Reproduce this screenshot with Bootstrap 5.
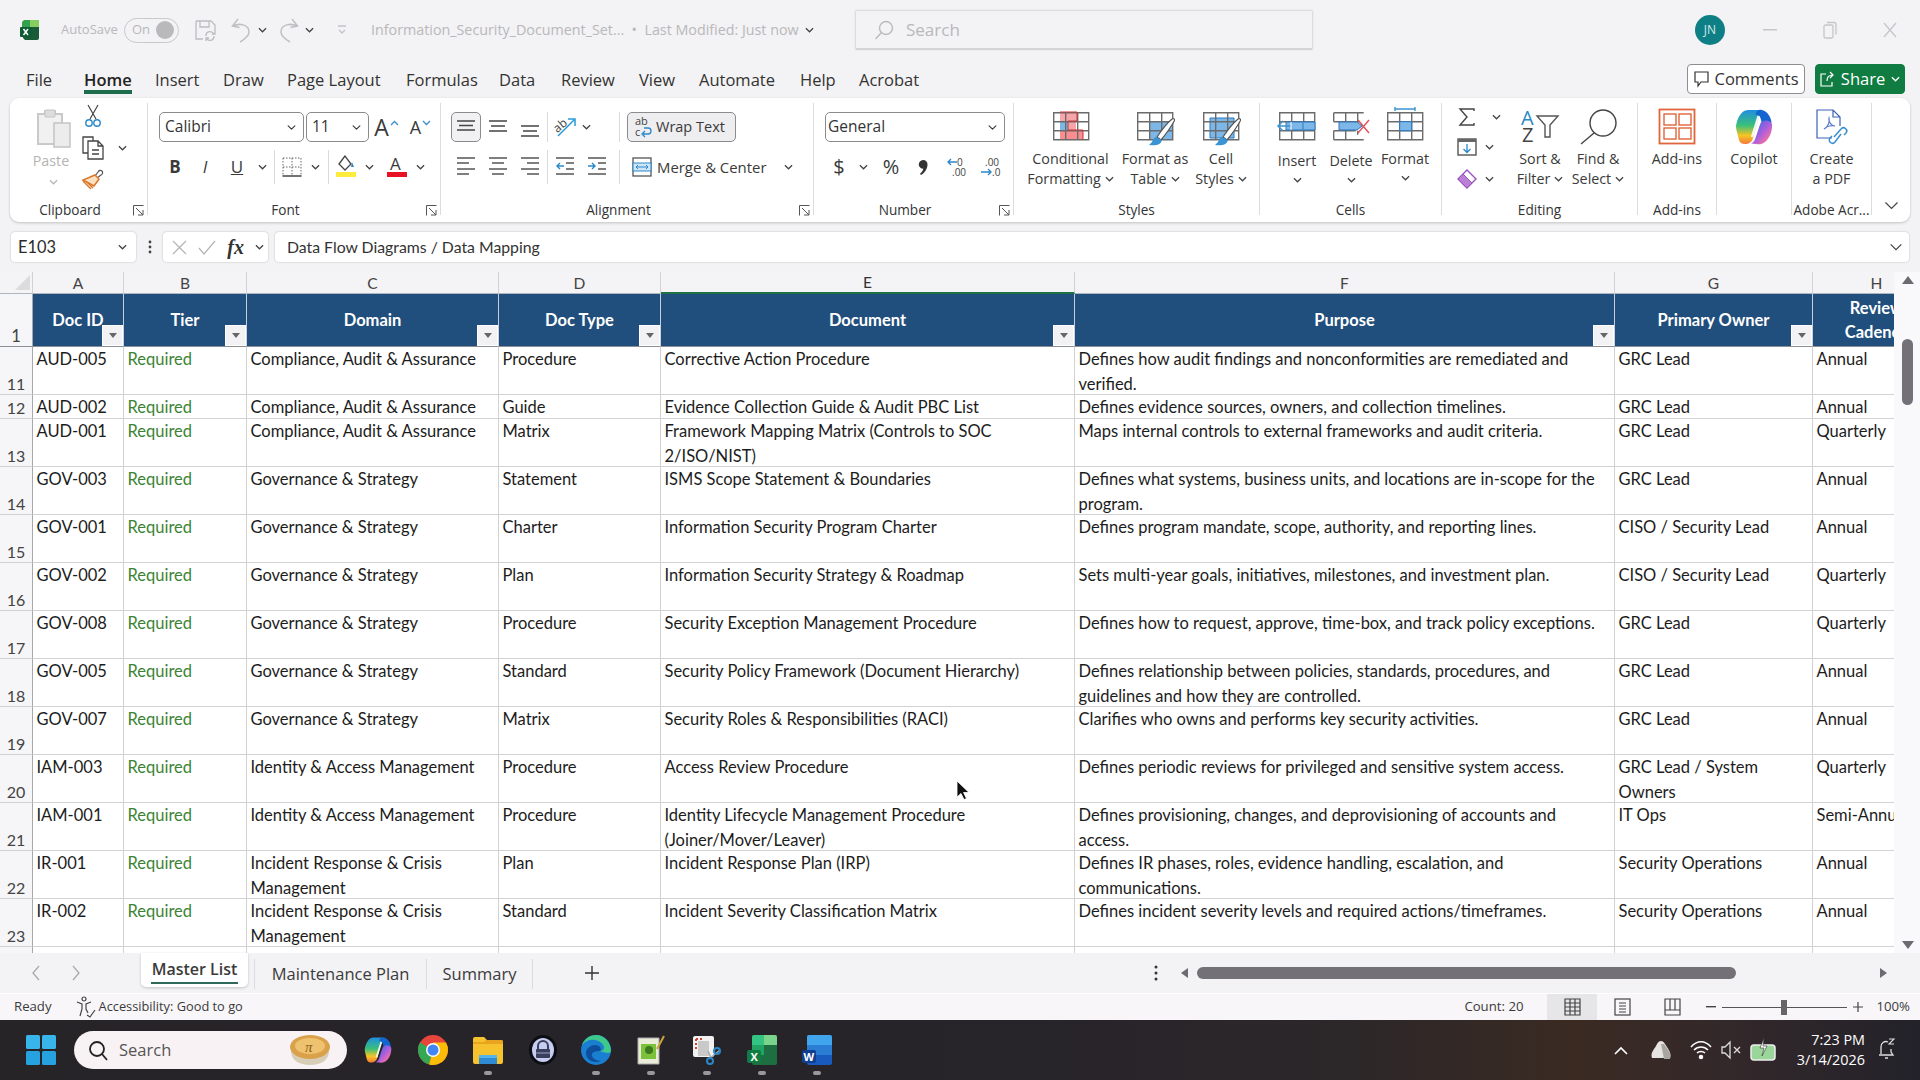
<!DOCTYPE html>
<html lang="en">
<head>
<meta charset="UTF-8">
<title>Information_Security_Document_Set</title>
<link rel="stylesheet" href="https://cdn.jsdelivr.net/npm/bootstrap@5.3.0/dist/css/bootstrap.min.css">
<style>
body { width:1920px; height:1080px; overflow:hidden; background:#f3f2f4; font-family:"Open Sans","Noto Sans",sans-serif; color:#2b2b2b; position:relative; }
svg { display:block; flex:none; overflow:visible; }
.chv { width:9px; height:6px; color:#444; }
.xl-title { display:grid; height:60px; padding-left:20px; align-items:center; justify-items:start; color:#b9b8bb; font-size:13px; white-space:nowrap;
  grid-template-columns:41px 63px 71px 36px 27px 21px 26px 31px 35px 484px 458px 382px 45px 60px 60px 60px; }
.ctr { justify-self:center; }
.xl-doc { font-size:14.3px; display:flex; align-items:center; gap:6px; }
.xl-toggle { width:55px; height:25px; border:1.5px solid #c9c8cb; border-radius:13px; display:flex; align-items:center; justify-content:space-between; padding:0 4px 0 7px; font-size:13px; }
.xl-toggle i { width:18px; height:18px; border-radius:50%; background:#b9b8bb; }
.xl-search { width:458px; height:40px; border:1px solid #dcdbde; border-bottom:2px solid #d3d2d5; border-radius:2px; display:flex; align-items:center; gap:12px; padding-left:18px; font-size:17px; box-shadow:0 0 2px #ddd; }
.xl-avatar { width:30px; height:30px; border-radius:50%; background:#0f7f86; color:#cfe9ea; font-size:12px; display:flex; align-items:center; justify-content:center; }
.xl-tabrow { height:38px; display:flex; justify-content:space-between; padding:0 15px 0 26px; }
.xl-tabs { display:grid; grid-template-columns:58px 71px 68px 64px 119px 93px 62px 78px 60px 101px 59px 70px; flex-wrap:nowrap; font-size:16.5px; height:38px; }
.xl-tabs .nav-link { padding:7px 0 0; color:#333; white-space:nowrap; display:inline-block; height:34px; line-height:26px; }
.xl-tabs .active { font-weight:600; border-bottom:4px solid #1e6e4d; color:#222; }
.xl-tabbtn { display:flex; gap:10px; padding-top:4px; }
.xl-tabbtn .btn { height:30px; padding:0; display:flex; align-items:center; justify-content:center; gap:6px; font-size:16.5px; border-radius:4px; }
.btn-cmt { width:118px; background:#fff; border:1px solid #8e8d90; color:#333; }
.btn-shr { width:90px; background:#107c41; border:1px solid #107c41; color:#fff; }

.xl-ribbon { height:124px; margin:0 10px; padding:5px 0 7px; background:#fff; border-radius:9px; box-shadow:0 1px 3px rgba(0,0,0,.2); display:flex; font-size:14.3px; color:#3a3a3a; white-space:nowrap; }
.rb-grp { display:flex; flex-direction:column; justify-content:space-between; height:112px; border-right:1px solid #dcdcdc; }
.rb-lbl { display:flex; height:10px; line-height:10px; font-size:13.6px; color:#333; flex:none; align-items:center; }
.rb-lbl span { flex:1; text-align:center; }
.rb-launch { width:17px; display:flex; justify-content:center; color:#555; }
.rb-body { display:flex; height:97px; }
.rb-stack { display:flex; flex-direction:column; gap:10px; padding-top:9px; }
.rb-row { display:grid; grid-template-rows:30px; align-items:center; justify-items:center; height:30px; }
.rb-sep { width:1px; height:30px; background:#dadada; }
.rb-row + .rb-row .rb-sep { height:34px; }
.xl-sel { height:30px; font-size:15.5px; padding:0 0 0 5px; border:1px solid #8b8b8b; border-radius:5px; color:#333; background-size:9px 9px; background-position:right 7px center; }
.rb-numsel { width:180px; justify-self:start; padding-left:2px; }
.rb-a { display:flex; align-items:flex-start; line-height:28px; color:#3a3a3a; }
.rb-a svg { margin-top:7px; margin-left:1px; }
.rb-a-lg { font-size:23px; } .rb-a-sm { font-size:18px; }
.rb-on { width:30px; height:30px; border:1px solid #8b8b8b; border-radius:5px; background:#f1f0f2; display:flex; align-items:center; justify-content:center; }
.rb-wrap { width:109px; height:30px; border:1px solid #8b8b8b; border-radius:5px; background:#eeedf0; display:flex; align-items:center; gap:3px; padding-left:7px; justify-self:start; font-size:14.5px; }
.rb-merge { display:flex; align-items:center; justify-self:start; padding-left:5px; gap:5px; width:170px; font-size:14.9px; }
.rb-merge .chv { margin-left:auto; margin-right:4px; }
.rb-big { display:flex; flex-direction:column; align-items:center; line-height:20px; }
.rb-big > svg { margin-top:5px; margin-bottom:3px; }
.rb-big .chv { display:inline-block; margin-left:4px; vertical-align:2px; }
.rb-big .lone { margin:6px 0 0; }
.rb-down { margin-top:2px; }
.tx-b { font-weight:700; font-size:17px; color:#3a3a3a; }
.tx-sym { font-size:20px; line-height:24px; }

.clip-wrap { padding-left:16px; }
.clip-paste { width:50px; color:#b5b5b5; }
.clip-paste > svg:first-child { margin-left:6px; }
.clip-small { display:grid; grid-template-columns:34px 24px; grid-auto-rows:32px; align-items:center; justify-items:center; margin:-3px 0 0 0; }
.g-clip { width:138px; }
.gw-font { width:293px; } .gw-align { width:373px; } .gw-num { width:200px; } .gw-sty { width:246px; } .gw-cel { width:182px; } .gw-edt { width:196px; } .gw-add { width:79px; } .gw-cop { width:75px; } .gw-pdf { width:80px; }
.pl-10 { padding-left:10px; }
.pl-11 { padding-left:11px; }
.pl-13 { padding-left:13px; }
.fr1 { grid-template-columns:145px 63px 35px 33px; }
.fr2 { grid-template-columns:28px 32px 32px 18px 6px 30px 16px 10px 26px 20px 36px 10px; }
.ar1 { grid-template-columns:30px 34px 30px 4px 32px 10px 26px 4px 6px 108px; }
.ar2 { grid-template-columns:30px 34px 30px 4px 32px 32px 4px 4px 6px 170px; }
.nr2 { grid-template-columns:28px 20px 36px 28px 3px 34px 32px; }
.sty-col { display:grid; grid-template-columns:87px 82px 50px; padding-left:13px; }
.cel-col { display:grid; grid-template-columns:54px 54px 54px; padding-left:10px; }
.edt-col { display:grid; grid-template-columns:58px 60px 56px; padding-left:10px; }
.edt-small { display:grid; grid-template-columns:30px 28px; grid-template-rows:28px 32px 32px; align-items:center; justify-items:center; }
.edt-small .near { margin-right:14px; }
.rb-one { justify-content:center; }
.rb-collapse { flex:1; display:flex; align-items:flex-end; justify-content:center; padding-bottom:5px; }
.rb-collapse svg { width:15px; height:9px; color:#444; }

.xl-fbar { height:50px; display:grid; grid-template-columns:125px 27px 105px 7px 1fr; align-items:center; padding:0 11px; font-family:Lato,sans-serif; font-size:16.4px; }
.fb-box { height:30px; background:#fff; border-radius:4px; box-shadow:0 0 2px rgba(0,0,0,.25); display:flex; align-items:center; }
.fb-name { padding:0 9px 0 7px; justify-content:space-between; }
.fb-fx { padding:0 4px 0 9px; justify-content:space-between; color:#aaa; }
.fb-fml { padding:0 6px 0 12px; justify-content:space-between; color:#333; font-size:15.8px; }
.fb-kebab { justify-self:center; }
.fb-fxt { font-family:"Liberation Serif",serif; font-style:italic; font-size:20px; color:#333; font-weight:700; }

.xl-sheet { position:relative; height:681px; overflow:hidden; background:#fff; }
.xl-gridwrap { width:1894px; height:681px; overflow:hidden; }
table.xl-grid { width:1941px; margin:0; table-layout:fixed; border-collapse:separate; border-spacing:0; font-family:Lato,sans-serif; font-size:16.5px; color:#1c1c1c; }
.xl-grid col:nth-child(1) { width:33px; } .xl-grid col:nth-child(2) { width:91px; } .xl-grid col:nth-child(3) { width:123px; } .xl-grid col:nth-child(4) { width:252px; }
.xl-grid col:nth-child(5) { width:162px; } .xl-grid col:nth-child(6) { width:414px; } .xl-grid col:nth-child(7) { width:540px; } .xl-grid col:nth-child(8) { width:198px; } .xl-grid col:nth-child(9) { width:128px; }
.xl-grid.table > :not(caption) > * > * { padding:0; background:transparent; border-bottom:1px solid #d2d2d2; border-right:1px solid #d2d2d2; box-shadow:none; color:inherit; }
.xl-grid.table > thead > .letters > th { height:21px; line-height:20px; background:#f4f3f5; font-weight:400; text-align:center; font-size:15.5px; color:#444; border-bottom:1px solid #aeb6c0; }
.xl-grid.table > thead > .letters > th.sel { border-bottom:2px solid #1e7145; color:#333; }
.xl-grid.table > thead > .heads > th { height:53px; background:#214f7d; color:#fff; font-weight:700; text-align:center; line-height:24px; position:relative; vertical-align:middle; border-right:1px solid #c7cfda; border-bottom:1px solid #8a8f96; }
.xl-grid.table > thead > .heads > th.rn { background:#f6f5f7; color:#444; font-weight:400; vertical-align:bottom; line-height:19px; border-right:1px solid #a8a8a8; border-bottom:1px solid #8a8f96; }
.xl-grid.table > tbody > tr > td.rn { background:#f6f5f7; color:#444; text-align:center; vertical-align:bottom; line-height:20px; border-right:1px solid #a8a8a8; font-size:16px; }
.xl-filter { position:absolute; right:0; bottom:0; width:21px; height:21px; background:#f2f2f4; border:1px solid #fff; display:flex; align-items:center; justify-content:center; }
.xl-filter i { border:4px solid transparent; border-top:5px solid #666; border-bottom:0; }
.cellt { padding:0 3.500px; line-height:24.5px; white-space:nowrap; overflow:hidden; }
.r1 .cellt { height:23px; } .r2 .cellt { height:47px; } .r3 .cellt { height:6px; }
.tier { color:#3c8434; }
.xl-corner { position:absolute; left:15px; top:3px; width:0; height:0; border-style:solid; border-width:0 0 15px 15px; border-color:transparent transparent #dcdbde transparent; }
.xl-vs { position:absolute; right:0; top:0; width:26px; height:681px; background:#f9f8fa; }
.vs-up { position:absolute; left:8px; top:4px; border:6px solid transparent; border-top:0; border-bottom:8px solid #6d6a70; }
.vs-thumb { position:absolute; left:8px; top:67px; width:11px; height:66px; border-radius:6px; background:#747078; }
.vs-dn { position:absolute; left:8px; bottom:4px; border:6px solid transparent; border-bottom:0; border-top:8px solid #6d6a70; }

.xl-sheets { height:40px; display:grid; grid-template-columns:40px 70px 107px 7px 172px 106px 118px 499px 12px 1fr; align-items:center; padding-left:31px; font-size:16.5px; color:#3b3b3b; white-space:nowrap; background:#f3f2f4; }
.sh-on { height:34px; align-self:start; background:#fff; border-radius:0 0 5px 5px; box-shadow:0 1px 3px rgba(0,0,0,.2); font-weight:600; text-align:center; position:relative; line-height:32px; font-size:16px; }
.sh-on::after { content:''; position:absolute; left:10px; right:10px; bottom:3px; height:2px; background:#2d6a5a; }
.sh-tab { display:flex; justify-content:center; border-right:1px solid #dcdbde; height:30px; align-items:center; margin-top:2px; }
.hs { display:flex; align-items:center; padding-left:19px; }
.hs-l { border:5.5px solid transparent; border-left:0; border-right:7px solid #6d6a70; margin-right:9px; }
.hs-r { border:5.5px solid transparent; border-right:0; border-left:7px solid #6d6a70; margin-left:144px; }
.hs-thumb { width:539px; height:12px; border-radius:6px; background:#747078; }
.xl-status { height:27px; background:#f8f6f9; border-top:1px solid #fff; display:flex; align-items:center; font-size:13.2px; color:#3a3a3a; padding-left:14px; white-space:nowrap; }
.st-acc { font-size:12.8px; margin-left:3px; }
.st-view { width:50px; height:27px; display:flex; align-items:center; justify-content:center; }
.st-view.on { background:#e6e5e7; }
.st-minus { margin-left:9px; }
.st-slide { width:125px; height:1px; background:#555; position:relative; margin:0 6px 0 6px; }
.st-slide i { position:absolute; left:59px; top:-7px; width:6px; height:15px; background:#666; }
.st-zoom { margin:0 10px 0 13px; }
.xl-task { height:60px; background:linear-gradient(90deg,#262427 0%,#27242a 55%,#2c2729 70%,#3a2a22 82%,#33282a 90%,#23222a 100%); display:flex; align-items:center; position:relative; color:#fff; }
.tb-start { margin-left:26px; }
.tb-search { width:273px; height:38px; margin-left:18px; background:#f8f2f4; border-radius:19px; display:flex; align-items:center; color:#555; font-size:16.5px; padding-left:14px; gap:11px; }
.tb-search svg:last-child { margin-left:auto; margin-right:15px; }
.tb-icons { display:grid; grid-template-columns:55px 55px 55px 55px 52px 58px 54px 55px 55px; margin-left:3px; justify-items:center; }
.tb-app { position:relative; height:60px; display:flex; align-items:center; }
.tb-app.run::after { content:''; position:absolute; bottom:5px; left:50%; margin-left:-4px; width:8px; height:4px; border-radius:2px; background:#9a989b; }
.tb-tray { margin-left:auto; display:flex; align-items:center; padding-right:24px; }
.tr-a { margin-right:22px; } .tr-b { margin-right:18px; } .tr-c { margin-right:9px; }
.tb-clock { text-align:right; font-size:14.4px; line-height:20px; margin:0 13px 0 21px; }
.xl-cursor { position:absolute; left:956px; top:780px; }
</style>
<script src="https://cdn.jsdelivr.net/npm/bootstrap@5.3.0/dist/js/bootstrap.bundle.min.js"></script>
</head>
<body class="d-flex flex-column">

<svg width="0" height="0" class="position-absolute">
  <defs>
    <symbol id="cv" viewBox="0 0 10 6"><path d="M1 1l4 4 4-4" fill="none" stroke="currentColor" stroke-width="1.4"/></symbol>
    <symbol id="lau" viewBox="0 0 11 11"><path d="M.5 10.5V.5h10M3 3l7 7M10 5v5H5" fill="none" stroke="currentColor"/></symbol>
    <linearGradient id="cpA" x1="0" y1="0" x2="0" y2="1"><stop offset="0" stop-color="#1f8fe0"/><stop offset=".45" stop-color="#39c07a"/><stop offset=".75" stop-color="#f6c524"/><stop offset="1" stop-color="#f5793a"/></linearGradient>
    <linearGradient id="cpB" x1="0" y1="0" x2="1" y2="1"><stop offset="0" stop-color="#1d6fd6"/><stop offset=".5" stop-color="#a55ee0"/><stop offset=".8" stop-color="#f06fa8"/><stop offset="1" stop-color="#f5793a"/></linearGradient>
    <symbol id="copilot" viewBox="0 0 38 38">
      <path d="M13 2h9c3 0 3.500 2 2.500 5L18 30c-1 4-4 6-8 6-5 0-6-3-7-8-1-4-2-7-2-10C2 11 6 2 13 2z" fill="url(#cpA)"/>
      <path d="M27 2c-3-1-5 0-6 3l-.500 2c2-1 4 0 5 3l1 4c.500 2 2 3 4 2 2 0 4-2 6-1 0-5-4-12-9.500-13z" fill="#1565d0"/>
      <path d="M37 16c.500 8-3 15-7 18-3 2.500-6 2.500-9 2l-5-.5c3-1 4-4 5-7l4-12c1-3 3-4 6-4 2 0 5 1 6 3.500z" fill="url(#cpB)"/>
      <path d="M23.500 8 17 29" stroke="#fff" stroke-width="2.400" opacity=".9"/>
    </symbol>
    <symbol id="grid36" viewBox="0 0 40 38"><path d="M2.700 4.700h35v27h-35zM2.700 13.700h35M2.700 22.700h35M14.700 4.700v27M26.700 4.700v27" fill="none" stroke="#6b6b6b" stroke-width="1.400"/></symbol>
    <symbol id="brush" viewBox="0 0 40 38"><path d="M37 11c1-1 3 0 2.500 1.500C36 19 31 26 26 32l-4-3c4-6 9-13 15-18z" fill="#fff" stroke="#555" stroke-width="1.200"/><path d="M21 29c-3 1-3 5-7 8 6 1 12 0 13-5z" fill="#3a94d3"/></symbol>
  </defs>
</svg>

<!-- Title bar -->
<div class="xl-title">
  <svg width="20" height="20" viewBox="0 0 20 20"><path d="M5 0h12a2 2 0 0 1 2 2v16a2 2 0 0 1-2 2H5l-2-2V2z" fill="#185c37"/><path d="M10 0h7a2 2 0 0 1 2 2v5h-9z" fill="#86cf5e"/><path d="M4 0h6v7H2V2z" fill="#33a04f"/><rect y="7" width="12" height="10" rx="1" fill="#0f5b33"/><path d="M3.500 9l4.500 6M8 9l-4.500 6" stroke="#fff" stroke-width="1.500"/></svg>
  <span>AutoSave</span>
  <div class="xl-toggle">On<i></i></div>
  <svg width="21" height="21" viewBox="0 0 21 21" fill="none" stroke="#bdbcc0" stroke-width="1.300"><path d="M1 1h15l4 4v6M1 1v18h7M5 1v6h9V1"/><path d="M11 16a4 4 0 0 1 7-3l2 1M19 16a4 4 0 0 1-7 3l-1-1M20 11v3h-3M11 21v-3h3"/></svg>
  <svg width="20" height="25" viewBox="0 0 20 25" fill="none" stroke="#c0bfc3" stroke-width="1.500"><path d="M7 1L1.500 8l7 1.500M2 8c6-3 16-2 16 6 0 4-4 7-9 10"/></svg>
  <svg class="chv"><use href="#cv"/></svg>
  <svg width="20" height="25" viewBox="0 0 20 25" fill="none" stroke="#c0bfc3" stroke-width="1.500"><path d="M13 1l5.500 7-7 1.500M18 8C12 5 2 6 2 14c0 4 4 7 9 10"/></svg>
  <svg class="chv"><use href="#cv"/></svg>
  <svg width="12" height="12" viewBox="0 0 12 12" fill="none" stroke="#c4c3c7" stroke-width="1.300"><path d="M2 2h8M3 6l3 3 3-3"/></svg>
  <span class="xl-doc">Information_Security_Document_Set... &nbsp;•&nbsp; Last Modified: Just now <svg class="chv"><use href="#cv"/></svg></span>
  <div class="xl-search"><svg width="20" height="20" viewBox="0 0 20 20" fill="none" stroke="#bbb" stroke-width="1.400"><circle cx="12" cy="8" r="6.500"/><path d="M7.500 12.500 1.500 19"/></svg>Search</div>
  <span></span>
  <div class="xl-avatar">JN</div>
  <svg class="ctr" width="14" height="2"><rect width="14" height="1.500" fill="#c6c5c9"/></svg>
  <svg class="ctr" width="14" height="18" viewBox="0 0 14 18" fill="none" stroke="#c6c5c9" stroke-width="1.300"><rect x="1" y="4" width="9" height="13" rx="1.500"/><path d="M4 1.500h7a2 2 0 0 1 2 2v10"/></svg>
  <svg class="ctr" width="14" height="18" viewBox="0 0 14 18" stroke="#c6c5c9" stroke-width="1.300"><path d="M1 2l12 14M13 2 1 16"/></svg>
</div>

<!-- Menu tabs -->
<div class="xl-tabrow">
  <ul class="nav xl-tabs">
    <li><a class="nav-link" href="#">File</a></li>
    <li><a class="nav-link active" href="#">Home</a></li>
    <li><a class="nav-link" href="#">Insert</a></li>
    <li><a class="nav-link" href="#">Draw</a></li>
    <li><a class="nav-link" href="#">Page Layout</a></li>
    <li><a class="nav-link" href="#">Formulas</a></li>
    <li><a class="nav-link" href="#">Data</a></li>
    <li><a class="nav-link" href="#">Review</a></li>
    <li><a class="nav-link" href="#">View</a></li>
    <li><a class="nav-link" href="#">Automate</a></li>
    <li><a class="nav-link" href="#">Help</a></li>
    <li><a class="nav-link" href="#">Acrobat</a></li>
  </ul>
  <div class="xl-tabbtn">
    <button class="btn btn-cmt"><svg width="15" height="16" viewBox="0 0 15 16" fill="none" stroke="#333" stroke-width="1.200"><path d="M1 1h13v10H7l-3 4v-4H1z"/></svg>Comments</button>
    <button class="btn btn-shr"><svg width="15" height="16" viewBox="0 0 15 16" fill="none" stroke="#fff" stroke-width="1.200"><path d="M6 3H1v12h11v-4M7 10c0-4 2-6 6-6M10 1l3 3-3 3"/></svg>Share <svg class="chv text-white"><use href="#cv"/></svg></button>
  </div>
</div>

<!-- Ribbon -->
<div class="xl-ribbon">
  <div class="rb-grp g-clip">
    <div class="rb-body clip-wrap">
      <div class="rb-big clip-paste">
        <svg width="36" height="40" viewBox="0 0 36 40"><path d="M2 6h7V3h10v3h7v30H2z" fill="#f1f1f1" stroke="#c9c9c9" stroke-width="2"/><rect x="9" y="2" width="10" height="7" rx="1" fill="#ddd" stroke="#c4c4c4"/><rect x="18" y="15" width="16" height="24" fill="#ececec" stroke="#c4c4c4" stroke-width="1.500"/></svg>
        <span>Paste</span>
        <svg class="chv text-secondary mt-2 opacity-50"><use href="#cv"/></svg>
      </div>
      <div class="clip-small">
        <svg width="22" height="24" viewBox="0 0 22 24" fill="none"><path d="M6 1l8 14M16 1 8 15" stroke="#444" stroke-width="1.200"/><circle cx="7" cy="19" r="3.200" stroke="#2b88c8" stroke-width="1.400"/><circle cx="15" cy="19" r="3.200" stroke="#2b88c8" stroke-width="1.400"/></svg>
        <span></span>
        <svg width="22" height="24" viewBox="0 0 22 24" fill="none" stroke="#444" stroke-width="1.300"><path d="M11 5V1H1v16h5"/><path d="M6 5h10l5 5v13H6zM16 5v5h5M10 14h7M10 18h7"/></svg>
        <svg class="chv"><use href="#cv"/></svg>
        <svg width="24" height="22" viewBox="0 0 24 22" fill="none"><path d="M14 7l3-4c1-2 3-2 4-1s1 3-1 4l-4 3z" stroke="#555" stroke-width="1.200"/><path d="M14 6l4 4-5 7-11-6z" fill="#fbe1c1" stroke="#d9782a" stroke-width="1.500"/><path d="M6 13l6 6M2 12l8 8" stroke="#d9782a" stroke-width="1.500"/></svg>
      </div>
    </div>
    <div class="rb-lbl"><span>Clipboard</span><div class="rb-launch"><svg width="11" height="11"><use href="#lau"/></svg></div></div>
  </div>

  <div class="rb-grp gw-font">
    <div class="rb-stack pl-13">
      <div class="rb-row fr1">
        <select class="form-select xl-sel w-100 me-1"><option>Calibri</option></select>
        <select class="form-select xl-sel w-100"><option>11</option></select>
        <span class="rb-a rb-a-lg">A<svg width="9" height="6" viewBox="0 0 9 6"><path d="M1 5l3.500-3.500L8 5" stroke="#3a8fd0" stroke-width="1.300" fill="none"/></svg></span>
        <span class="rb-a rb-a-sm">A<svg width="9" height="6" viewBox="0 0 9 6"><path d="M1 1l3.500 3.500L8 1" stroke="#3a8fd0" stroke-width="1.300" fill="none"/></svg></span>
      </div>
      <div class="rb-row fr2">
        <span class="tx-b">B</span><i class="tx-b fw-normal">I</i><span class="text-decoration-underline tx-b fw-normal">U</span>
        <svg class="chv"><use href="#cv"/></svg>
        <span class="rb-sep"></span>
        <svg width="20" height="20" viewBox="0 0 20 20" fill="none" stroke="#666"><path d="M1 1h18v18M1 1v18M10 1v18M1 10h18" stroke-dasharray="1.500 1.500"/><path d="M.5 19h19" stroke="#444" stroke-width="1.500"/></svg>
        <svg class="chv"><use href="#cv"/></svg>
        <span class="rb-sep"></span>
        <svg width="20" height="24" viewBox="0 0 20 24"><path d="M9 1 3 9l6 6 6-6z" fill="#fff" stroke="#444" stroke-width="1.300"/><path d="M16 7l2 5-3 0z" fill="#2b88c8"/><rect y="17" width="20" height="5" fill="#ffeb3b"/></svg>
        <svg class="chv"><use href="#cv"/></svg>
        <svg width="20" height="24" viewBox="0 0 20 24"><text x="3" y="15" font-size="17" fill="#3a3a3a" font-family="Open Sans">A</text><rect y="17" width="20" height="5" fill="#e81123"/></svg>
        <svg class="chv"><use href="#cv"/></svg>
      </div>
    </div>
    <div class="rb-lbl"><span>Font</span><div class="rb-launch"><svg width="11" height="11"><use href="#lau"/></svg></div></div>
  </div>

  <div class="rb-grp gw-align">
    <div class="rb-stack pl-10">
      <div class="rb-row ar1">
        <div class="rb-on"><svg width="18" height="16" viewBox="0 0 18 16" stroke="#444" stroke-width="1.300"><path d="M0 2h18M2 6.500h14M0 11h18"/></svg></div>
        <svg width="18" height="24" viewBox="0 0 18 24" stroke="#444" stroke-width="1.300"><path d="M0 6h18M2 11h14M0 16h18"/></svg>
        <svg width="18" height="24" viewBox="0 0 18 24" stroke="#444" stroke-width="1.300"><path d="M0 11h18M2 16h14M0 21h18"/></svg>
        <span class="rb-sep"></span>
        <svg width="22" height="20" viewBox="0 0 22 20"><text x="0" y="13" font-size="12" fill="#444" font-family="Open Sans" transform="rotate(-40 6 10)">ab</text><path d="M4 19 20 3M14 2h7v7" fill="none" stroke="#2b9ad6" stroke-width="1.500"/></svg>
        <svg class="chv"><use href="#cv"/></svg>
        <span></span>
        <span class="rb-sep"></span>
        <span></span>
        <div class="rb-wrap"><svg width="18" height="22" viewBox="0 0 18 22"><text x="0" y="9" font-size="11" fill="#444" font-family="Open Sans">ab</text><text x="0" y="20" font-size="11" fill="#444" font-family="Open Sans">c</text><path d="M8 18h5c4 0 4-6 0-6H9M10 15l-3 3 3 3" fill="none" stroke="#2b88c8" stroke-width="1.300"/></svg>Wrap Text</div>
      </div>
      <div class="rb-row ar2">
        <svg width="18" height="24" viewBox="0 0 18 24" stroke="#555" stroke-width="1.400"><path d="M0 3h18M0 8h12M0 14h18M0 19h12"/></svg>
        <svg width="18" height="24" viewBox="0 0 18 24" stroke="#555" stroke-width="1.400"><path d="M0 3h18M3 8h12M0 14h18M3 19h12"/></svg>
        <svg width="18" height="24" viewBox="0 0 18 24" stroke="#555" stroke-width="1.400"><path d="M0 3h18M6 8h12M0 14h18M6 19h12"/></svg>
        <span class="rb-sep"></span>
        <svg width="18" height="24" viewBox="0 0 18 24" fill="none" stroke-width="1.400"><path d="M0 3h18M10 8h8M10 14h8M0 19h18" stroke="#555"/><path d="M8 11H1M4 8l-3 3 3 3" stroke="#2b88c8"/></svg>
        <svg width="18" height="24" viewBox="0 0 18 24" fill="none" stroke-width="1.400"><path d="M0 3h18M10 8h8M10 14h8M0 19h18" stroke="#555"/><path d="M0 11h7M4 8l3 3-3 3" stroke="#2b88c8"/></svg>
        <span></span>
        <span class="rb-sep"></span>
        <span></span>
        <div class="rb-merge"><svg width="20" height="20" viewBox="0 0 20 20" fill="none"><rect x="1" y="1" width="18" height="18" stroke="#555" stroke-width="1.300"/><rect x="1" y="6" width="18" height="8" fill="#cfe6f6" stroke="#2b88c8"/><path d="M4 10h12M6 8l-2 2 2 2M14 8l2 2-2 2" stroke="#2b88c8"/></svg>Merge &amp; Center<svg class="chv"><use href="#cv"/></svg></div>
      </div>
    </div>
    <div class="rb-lbl"><span>Alignment</span><div class="rb-launch"><svg width="11" height="11"><use href="#lau"/></svg></div></div>
  </div>

  <div class="rb-grp gw-num">
    <div class="rb-stack pl-11">
      <div class="rb-row justify-items-start"><select class="form-select xl-sel rb-numsel"><option>General</option></select></div>
      <div class="rb-row nr2">
        <span class="tx-sym">$</span>
        <svg class="chv"><use href="#cv"/></svg>
        <span class="tx-sym">%</span>
        <svg width="9" height="15" viewBox="0 0 9 15" fill="#333"><path d="M4 0a4.300 4.300 0 0 1 4.500 4.500c0 4.500-3 8.500-6.500 10.500l-1-1.200c2-1.700 3-3.200 3.300-5A4.300 4.300 0 0 1 4 0z"/></svg>
        <span></span>
        <svg width="20" height="20" viewBox="0 0 20 20"><text x="10" y="9" font-size="10" fill="#444" font-family="Open Sans">0</text><text x="5" y="19" font-size="10" fill="#444" font-family="Open Sans">.00</text><path d="M10 5H1M4 2 1 5l3 3" fill="none" stroke="#2b88c8" stroke-width="1.300"/></svg>
        <svg width="20" height="20" viewBox="0 0 20 20"><text x="5" y="9" font-size="10" fill="#444" font-family="Open Sans">.00</text><text x="12" y="19" font-size="10" fill="#444" font-family="Open Sans">.0</text><path d="M1 15h10M8 12l3 3-3 3" fill="none" stroke="#2b88c8" stroke-width="1.300"/></svg>
      </div>
    </div>
    <div class="rb-lbl"><span>Number</span><div class="rb-launch"><svg width="11" height="11"><use href="#lau"/></svg></div></div>
  </div>

  <div class="rb-grp gw-sty">
    <div class="rb-body sty-col">
      <div class="rb-big">
        <svg width="40" height="38" viewBox="0 0 40 38"><path d="M9 4h18v9H9zM15 13h10v9H15z" fill="#f7a5a8"/><path d="M9 13h8v9H9z" fill="#7db7e8"/><path d="M9 22h23v10H9z" fill="#f98d90"/><use href="#grid36" width="40" height="38"/><path d="M9 4h17v9h-9v9h15v10" fill="none" stroke="#c9343b"/></svg>
        <span>Conditional</span><span>Formatting<svg class="chv"><use href="#cv"/></svg></span>
      </div>
      <div class="rb-big">
        <svg width="40" height="38" viewBox="0 0 40 38"><path d="M15 13h23v19H15z" fill="#7db7e8"/><use href="#grid36" width="40" height="38"/><use href="#brush" width="40" height="38"/></svg>
        <span>Format as</span><span>Table<svg class="chv"><use href="#cv"/></svg></span>
      </div>
      <div class="rb-big">
        <svg width="40" height="38" viewBox="0 0 40 38"><path d="M9 10h24v20H9z" fill="#7db7e8" stroke="#2b78c0"/><use href="#grid36" width="40" height="38"/><use href="#brush" width="40" height="38"/></svg>
        <span>Cell</span><span>Styles<svg class="chv"><use href="#cv"/></svg></span>
      </div>
    </div>
    <div class="rb-lbl"><span>Styles</span></div>
  </div>

  <div class="rb-grp gw-cel">
    <div class="rb-body cel-col">
      <div class="rb-big">
        <svg width="40" height="38" viewBox="0 0 40 38"><use href="#grid36" width="40" height="38"/><path d="M9 14h29v8H9z" fill="#7db7e8" stroke="#2b78c0"/><path d="M14 18H2M6 13l-5 5 5 5M26 14v8" fill="none" stroke="#3a94d3" stroke-width="1.500"/><path d="M14 14v8" stroke="#fff"/></svg>
        <span class="rb-down">Insert</span><svg class="chv lone"><use href="#cv"/></svg>
      </div>
      <div class="rb-big">
        <svg width="40" height="38" viewBox="0 0 40 38"><path d="M2.700 4.700h30M2.700 31.700h30M2.700 4.700v9M2.700 22.700v9M14.700 4.700v9M14.700 22.700v9M26.700 4.700v9M26.700 22.700v4M2.700 13.700h26M2.700 22.700h22" fill="none" stroke="#6b6b6b" stroke-width="1.400"/><path d="M8 14h18l5 4-5 4H8z" fill="#7db7e8" stroke="#2b78c0"/><path d="M27 12l11 13M38 12 27 25" stroke="#e0555d" stroke-width="1.500"/></svg>
        <span class="rb-down">Delete</span><svg class="chv lone"><use href="#cv"/></svg>
      </div>
      <div class="rb-big">
        <svg width="40" height="38" viewBox="0 0 40 38"><use href="#grid36" width="40" height="38"/><path d="M14.700 13.700h12v9h-12z" fill="#7db7e8" stroke="#2b78c0"/><path d="M10 1h20M10 -1v4M30 -1v4" stroke="#3a94d3" stroke-width="1.400"/></svg>
        <span>Format</span><svg class="chv lone"><use href="#cv"/></svg>
      </div>
    </div>
    <div class="rb-lbl"><span>Cells</span></div>
  </div>

  <div class="rb-grp gw-edt">
    <div class="rb-body edt-col">
      <div class="edt-small">
        <svg width="18" height="18" viewBox="0 0 18 18" fill="none" stroke="#444" stroke-width="1.400"><path d="M16 3V1H2l7 8-7 8h14v-2"/></svg>
        <svg class="chv"><use href="#cv"/></svg>
        <svg width="20" height="18" viewBox="0 0 20 18"><rect x="1" y="1" width="18" height="16" fill="#fff" stroke="#555" stroke-width="1.400"/><rect x="1" y="1" width="18" height="3" fill="#666"/><path d="M10 6v8M6.500 11l3.500 3.500 3.500-3.500" fill="none" stroke="#2b88c8" stroke-width="1.300"/></svg>
        <svg class="chv near"><use href="#cv"/></svg>
        <svg width="20" height="20" viewBox="0 0 20 20"><path d="M10 1l9 9-9 9-9-9z" fill="#fff" stroke="#9b4fc0" stroke-width="1.400"/><path d="M1 10l5-5 9 9-5 5z" fill="#b980d4" stroke="#9b4fc0"/></svg>
        <svg class="chv near"><use href="#cv"/></svg>
      </div>
      <div class="rb-big">
        <svg width="40" height="38" viewBox="0 0 40 38"><text x="1" y="17" font-size="20" fill="#2b88c8" font-family="Open Sans">A</text><text x="2" y="34" font-size="20" fill="#444" font-family="Open Sans">Z</text><path d="M17 8h21l-8 9v12h-5V17z" fill="none" stroke="#555" stroke-width="1.400"/></svg>
        <span>Sort &amp;</span><span>Filter<svg class="chv"><use href="#cv"/></svg></span>
      </div>
      <div class="rb-big">
        <svg width="40" height="38" viewBox="0 0 40 38" fill="none" stroke="#444" stroke-width="1.400"><circle cx="25" cy="15" r="13"/><path d="M16 25 3 36"/></svg>
        <span>Find &amp;</span><span>Select<svg class="chv"><use href="#cv"/></svg></span>
      </div>
    </div>
    <div class="rb-lbl"><span>Editing</span></div>
  </div>

  <div class="rb-grp gw-add">
    <div class="rb-body rb-one">
      <div class="rb-big">
        <svg width="40" height="38" viewBox="0 0 40 38" fill="none" stroke="#e0653a" stroke-width="1.800"><rect x="2.500" y="1.500" width="35" height="34"/><rect x="7" y="6" width="12" height="11" stroke-width="1.400"/><rect x="22" y="6" width="12" height="11" stroke-width="1.400"/><rect x="7" y="20" width="12" height="11" stroke-width="1.400"/><rect x="22" y="20" width="12" height="11" stroke-width="1.400"/></svg>
        <span>Add-ins</span>
      </div>
    </div>
    <div class="rb-lbl"><span>Add-ins</span></div>
  </div>

  <div class="rb-grp gw-cop">
    <div class="rb-body rb-one">
      <div class="rb-big"><svg width="38" height="38"><use href="#copilot"/></svg><span>Copilot</span></div>
    </div>
    <div class="rb-lbl"><span></span></div>
  </div>

  <div class="rb-grp gw-pdf">
    <div class="rb-body rb-one">
      <div class="rb-big">
        <svg width="36" height="38" viewBox="0 0 36 38" fill="none" stroke="#3c62b5" stroke-width="1.200"><path d="M19 30H4V2h16l7 7v9M20 2v7h7"/><path d="M11 21c4-2 6-7 5-11-1 3 2 8 6 8-3-1-8 0-11 3z" stroke="#5b7ccc"/><path d="M21 29l7-8a3 3 0 0 1 5 4l-2 2M28 26l-6 8a3 3 0 0 1-5-4l2-2" stroke="#3a8fd0" stroke-width="1.500"/></svg>
        <span>Create</span><span>a PDF</span>
      </div>
    </div>
    <div class="rb-lbl"><span>Adobe Acr...</span></div>
  </div>

  <div class="rb-collapse"><svg viewBox="0 0 10 6"><path d="M1 1l4 4 4-4" fill="none" stroke="currentColor" stroke-width=".8"/></svg></div>
</div>

<!-- Formula bar -->
<div class="xl-fbar">
  <div class="fb-box fb-name"><span>E103</span><svg class="chv"><use href="#cv"/></svg></div>
  <svg class="fb-kebab" width="4" height="14" viewBox="0 0 4 14" fill="#444"><circle cx="2" cy="2" r="1.400"/><circle cx="2" cy="7" r="1.400"/><circle cx="2" cy="12" r="1.400"/></svg>
  <div class="fb-box fb-fx">
    <svg width="15" height="15" viewBox="0 0 15 15" stroke="#b4b4b4" stroke-width="1.200"><path d="M1 1l13 13M14 1 1 14"/></svg>
    <svg width="18" height="15" viewBox="0 0 18 15" fill="none" stroke="#b4b4b4" stroke-width="1.200"><path d="M1 8l5 6L17 1"/></svg>
    <span class="fb-fxt">fx</span>
    <svg class="chv"><use href="#cv"/></svg>
  </div>
  <span></span>
  <div class="fb-box fb-fml"><span>Data Flow Diagrams / Data Mapping</span><svg width="14" height="8" viewBox="0 0 10 6"><path d="M1 1l4 4 4-4" fill="none" stroke="#444" stroke-width=".9"/></svg></div>
</div>

<!-- Sheet grid -->
<div class="xl-sheet">
  <div class="xl-gridwrap">
    <table class="table xl-grid">
      <colgroup><col><col><col><col><col><col><col><col><col></colgroup>
      <thead>
        <tr class="letters"><th></th><th>A</th><th>B</th><th>C</th><th>D</th><th class="sel">E</th><th>F</th><th>G</th><th>H</th></tr>
        <tr class="heads">
          <th class="rn">1</th>
          <th>Doc ID<span class="xl-filter"><i></i></span></th>
          <th>Tier<span class="xl-filter"><i></i></span></th>
          <th>Domain<span class="xl-filter"><i></i></span></th>
          <th>Doc Type<span class="xl-filter"><i></i></span></th>
          <th>Document<span class="xl-filter"><i></i></span></th>
          <th>Purpose<span class="xl-filter"><i></i></span></th>
          <th>Primary Owner<span class="xl-filter"><i></i></span></th>
          <th>Review<br>Cadence</th>
        </tr>
      </thead>
      <tbody id="sheetBody"></tbody>
    </table>
  </div>
  <span class="xl-corner"></span>
  <div class="xl-vs"><i class="vs-up"></i><i class="vs-thumb"></i><i class="vs-dn"></i></div>
</div>

<!-- Sheet tabs -->
<div class="xl-sheets">
  <svg width="10" height="16" viewBox="0 0 10 16" fill="none" stroke="#aaa" stroke-width="1.300"><path d="M8 1 2 8l6 7"/></svg>
  <svg width="10" height="16" viewBox="0 0 10 16" fill="none" stroke="#aaa" stroke-width="1.300"><path d="M2 1l6 7-6 7"/></svg>
  <div class="sh-on">Master List</div>
  <span class="sh-tab"></span>
  <span class="sh-tab">Maintenance Plan</span>
  <span class="sh-tab">Summary</span>
  <svg class="ctr" width="16" height="16" viewBox="0 0 16 16" stroke="#333" stroke-width="1.400"><path d="M8 1v14M1 8h14"/></svg>
  <span></span>
  <svg class="ctr" width="4" height="16" viewBox="0 0 4 16" fill="#333"><circle cx="2" cy="2" r="1.500"/><circle cx="2" cy="8" r="1.500"/><circle cx="2" cy="14" r="1.500"/></svg>
  <div class="hs"><i class="hs-l"></i><i class="hs-thumb"></i><i class="hs-r"></i></div>
</div>

<!-- Status bar -->
<div class="xl-status">
  <span>Ready</span>
  <svg class="ms-4" width="20" height="22" viewBox="0 0 20 22" fill="none" stroke="#444" stroke-width="1.200"><circle cx="8" cy="3" r="2"/><path d="M1 6l5 2v5l-2 7M15 6l-5 2v5l2 4M11 19l3 2 5-7"/></svg>
  <span class="st-acc">Accessibility: Good to go</span>
  <span class="ms-auto">Count: 20</span>
  <div class="st-view on ms-4"><svg width="17" height="18" viewBox="0 0 17 18" fill="none" stroke="#444" stroke-width="1.200"><path d="M1 1h15v16H1zM1 5h15M1 9h15M1 13h15M6 1v16M11 1v16"/></svg></div>
  <div class="st-view"><svg width="17" height="18" viewBox="0 0 17 18" fill="none" stroke="#444" stroke-width="1.200"><rect x="1" y="1" width="15" height="16"/><path d="M5 5h7M5 8h7M5 11h7M5 14h7"/></svg></div>
  <div class="st-view"><svg width="17" height="18" viewBox="0 0 17 18" fill="none" stroke="#444" stroke-width="1.200"><path d="M1 1h15v16H1zM1 12h15M6 1v11M11 1v11"/></svg></div>
  <svg class="st-minus" width="10" height="2"><rect width="10" height="1.400" fill="#444"/></svg>
  <div class="st-slide"><i></i></div>
  <svg width="10" height="10" viewBox="0 0 10 10" stroke="#444" stroke-width="1.200"><path d="M5 0v10M0 5h10"/></svg>
  <span class="st-zoom">100%</span>
</div>

<!-- Taskbar -->
<div class="xl-task">
  <svg class="tb-start" width="30" height="30" viewBox="0 0 30 30"><g fill="#38b6ec"><rect width="14" height="14" rx="1.500"/><rect x="16" width="14" height="14" rx="1.500"/><rect y="16" width="14" height="14" rx="1.500" fill="#27a2e0"/><rect x="16" y="16" width="14" height="14" rx="1.500" fill="#27a2e0"/></g></svg>
  <div class="tb-search">
    <svg width="20" height="21" viewBox="0 0 20 21" fill="none" stroke="#222" stroke-width="1.800"><circle cx="9" cy="9" r="7"/><path d="M14 14l5 6"/></svg>
    <span>Search</span>
    <svg width="44" height="34" viewBox="0 0 44 34"><path d="M3 18c0 9 8 14 19 14s19-5 19-14z" fill="#d8cdb6"/><ellipse cx="22" cy="14" rx="20" ry="12" fill="#d9a24a"/><ellipse cx="22" cy="13" rx="15" ry="8" fill="#eec26e"/><text x="17" y="19" font-size="15" font-style="italic" fill="#8a5a1c" font-family="Liberation Serif">π</text></svg>
  </div>
  <div class="tb-icons">
    <div class="tb-app"><svg width="28" height="28"><use href="#copilot"/></svg></div>
    <div class="tb-app"><svg width="30" height="30" viewBox="0 0 30 30"><circle cx="15" cy="15" r="15" fill="#e8453c"/><path d="M15 15 2 7.500A15 15 0 0 0 11 29.500z" fill="#34a853"/><path d="M15 15l-4 14.500A15 15 0 0 0 28 7.500H15z" fill="#fbbc05"/><circle cx="15" cy="15" r="7" fill="#fff"/><circle cx="15" cy="15" r="5.500" fill="#4285f4"/></svg></div>
    <div class="tb-app run"><svg width="30" height="28" viewBox="0 0 30 28"><path d="M0 3a2 2 0 0 1 2-2h9l3 3h14a2 2 0 0 1 2 2v20a2 2 0 0 1-2 2H2a2 2 0 0 1-2-2z" fill="#f6c22e"/><path d="M0 8h30V6a2 2 0 0 0-2-2H13l-2 2H0z" fill="#e9a51f"/><path d="M6 21h18v7H6z" fill="#2f8bd4"/><path d="M6 19h18v3H6z" fill="#56b3ec"/></svg></div>
    <div class="tb-app"><svg width="28" height="30" viewBox="0 0 28 30"><ellipse cx="14" cy="15" rx="14" ry="15" fill="#0d0d14"/><ellipse cx="14" cy="15" rx="11" ry="12" fill="#c7cdf0"/><path d="M9 14v-3a5 5 0 0 1 10 0v3" fill="none" stroke="#3a3f5c" stroke-width="2"/><rect x="7" y="14" width="14" height="9" rx="1" fill="#3a3f5c"/><path d="M7 18h14" stroke="#9aa2d0"/></svg></div>
    <div class="tb-app run"><svg width="30" height="30" viewBox="0 0 30 30"><circle cx="15" cy="15" r="15" fill="#1a7fd1"/><path d="M30 16C30 8 24 0 15 0 9 0 3 4 1 10c3-4 8-6 13-5 6 1 9 5 9 8 0 2-2 3-4 3 4 2 11 3 11 0z" fill="#3fc88c"/><path d="M19 16c-2 0-7 0-8 3s3 7 9 7c-9 3-15-2-15-8 0-5 5-8 9-8 5 0 7 4 5 6z" fill="#0d4f9c"/></svg></div>
    <div class="tb-app run"><svg width="28" height="30" viewBox="0 0 28 30"><path d="M1 3h21v26H1z" fill="#e8ecd8" stroke="#aaa"/><path d="M4 9h15v15H4z" fill="#7cc13a"/><circle cx="12" cy="15" r="4" fill="#3d7a1f"/><path d="M20 14 27 1" stroke="#c9a33a" stroke-width="2"/></svg></div>
    <div class="tb-app run"><svg width="30" height="30" viewBox="0 0 30 30"><rect x="1" y="1" width="21" height="21" rx="2" fill="#f2f1f1"/><rect x="6" y="6" width="11" height="15" fill="#c9c9c9"/><path d="M4 4h8" stroke="#c9452f" stroke-width="2" stroke-dasharray="2 2"/><path d="M4 4v10" stroke="#c9452f" stroke-width="2" stroke-dasharray="2 2"/><path d="M16 16l3 7M28 15 17 24" stroke="#aaa" stroke-width="1.500"/><circle cx="18" cy="26" r="3" fill="none" stroke="#2b88c8" stroke-width="2"/><circle cx="25" cy="16" r="3" fill="none" stroke="#2b88c8" stroke-width="2"/></svg></div>
    <div class="tb-app run"><svg width="30" height="30" viewBox="0 0 30 30"><rect x="5" y="0" width="25" height="30" rx="2" fill="#1d6f42"/><path d="M5 2a2 2 0 0 1 2-2h10v10H5z" fill="#33c481"/><path d="M17 0h11a2 2 0 0 1 2 2v8H17z" fill="#7ad48c"/><path d="M5 10h12v10H5z" fill="#21a366"/><rect x="0" y="15" width="14" height="13" rx="2" fill="#107c41"/><text x="3.500" y="25.500" font-size="11" font-weight="700" fill="#fff" font-family="Open Sans">X</text></svg></div>
    <div class="tb-app run"><svg width="30" height="30" viewBox="0 0 30 30"><rect x="5" y="0" width="25" height="30" rx="2" fill="#185abd"/><path d="M5 2a2 2 0 0 1 2-2h21a2 2 0 0 1 2 2v8H5z" fill="#41a5ee"/><path d="M5 10h25v10H5z" fill="#2b7cd3"/><rect x="0" y="15" width="14" height="13" rx="2" fill="#103f91"/><text x="1.500" y="25.500" font-size="11" font-weight="700" fill="#fff" font-family="Open Sans">W</text></svg></div>
  </div>
  <div class="tb-tray">
    <svg class="tr-a" width="14" height="9" viewBox="0 0 14 9" fill="none" stroke="#fff" stroke-width="1.600"><path d="M1 8l6-6 6 6"/></svg>
    <svg class="tr-b" width="22" height="22" viewBox="0 0 22 22"><path d="M2 19c-2-6 3-9 5-14 2-4 6-4 8 0 3 5 7 9 5 14z" fill="#e6e4e2"/><path d="M11 5l3 15h6c2-6-3-10-6-15z" fill="#a8a5a2"/></svg>
    <svg class="tr-c" width="22" height="20" viewBox="0 0 22 20" fill="none" stroke="#fff" stroke-width="1.500"><path d="M1 7c6-7 14-7 20 0M4 10c4-4 10-4 14 0M7 13c2-2 6-2 8 0"/><circle cx="11" cy="17" r="1.500" fill="#fff"/></svg>
    <svg class="tr-c" width="20" height="20" viewBox="0 0 20 20" fill="none" stroke="#ddd" stroke-width="1.300"><path d="M1 7h3l5-5v16l-5-5H1zM13 7l6 6M19 7l-6 6"/></svg>
    <svg width="26" height="26" viewBox="0 0 26 26"><rect x="1" y="8" width="24" height="15" rx="3" fill="#9ad69a" stroke="#eee" stroke-width="1.500"/><path d="M14 1l-4 10h4l-2 8 5-10h-4z" fill="#fff" stroke="#333" stroke-width=".6"/></svg>
    <div class="tb-clock">7:23 PM<br>3/14/2026</div>
    <svg width="18" height="24" viewBox="0 0 18 24" fill="none" stroke="#ddd" stroke-width="1.300"><path d="M3 16V9a5 5 0 0 1 7-5M1 17h14l-2-3v-3M7 20h3"/><path d="M11 1h5l-5 5h5" stroke-width="1.100"/></svg>
  </div>
</div>

<svg class="xl-cursor" width="14" height="21" viewBox="0 0 14 21"><path d="M1 1v16l4-3.500 3 6 2.500-1-3-6H13z" fill="#111" stroke="#fff" stroke-width=".8"/></svg>

<script>
const AUDIT = "Compliance, Audit & Assurance", GOV = "Governance & Strategy", IAM = "Identity & Access Management", IR = "Incident Response & Crisis\nManagement";
// rowNo, height class, id, domain, type, document, purpose, owner, cadence
const rows = [
  [11,"r2","AUD-005",AUDIT,"Procedure","Corrective Action Procedure","Defines how audit findings and nonconformities are remediated and\nverified.","GRC Lead","Annual"],
  [12,"r1","AUD-002",AUDIT,"Guide","Evidence Collection Guide & Audit PBC List","Defines evidence sources, owners, and collection timelines.","GRC Lead","Annual"],
  [13,"r2","AUD-001",AUDIT,"Matrix","Framework Mapping Matrix (Controls to SOC\n2/ISO/NIST)","Maps internal controls to external frameworks and audit criteria.","GRC Lead","Quarterly"],
  [14,"r2","GOV-003",GOV,"Statement","ISMS Scope Statement & Boundaries","Defines what systems, business units, and locations are in-scope for the\nprogram.","GRC Lead","Annual"],
  [15,"r2","GOV-001",GOV,"Charter","Information Security Program Charter","Defines program mandate, scope, authority, and reporting lines.","CISO / Security Lead","Annual"],
  [16,"r2","GOV-002",GOV,"Plan","Information Security Strategy & Roadmap","Sets multi-year goals, initiatives, milestones, and investment plan.","CISO / Security Lead","Quarterly"],
  [17,"r2","GOV-008",GOV,"Procedure","Security Exception Management Procedure","Defines how to request, approve, time-box, and track policy exceptions.","GRC Lead","Quarterly"],
  [18,"r2","GOV-005",GOV,"Standard","Security Policy Framework (Document Hierarchy)","Defines relationship between policies, standards, procedures, and\nguidelines and how they are controlled.","GRC Lead","Annual"],
  [19,"r2","GOV-007",GOV,"Matrix","Security Roles & Responsibilities (RACI)","Clarifies who owns and performs key security activities.","GRC Lead","Annual"],
  [20,"r2","IAM-003",IAM,"Procedure","Access Review Procedure","Defines periodic reviews for privileged and sensitive system access.","GRC Lead / System\nOwners","Quarterly"],
  [21,"r2","IAM-001",IAM,"Procedure","Identity Lifecycle Management Procedure\n(Joiner/Mover/Leaver)","Defines provisioning, changes, and deprovisioning of accounts and\naccess.","IT Ops","Semi-Annual"],
  [22,"r2","IR-001",IR,"Plan","Incident Response Plan (IRP)","Defines IR phases, roles, evidence handling, escalation, and\ncommunications.","Security Operations","Annual"],
  [23,"r2","IR-002",IR,"Standard","Incident Severity Classification Matrix","Defines incident severity levels and required actions/timeframes.","Security Operations","Annual"],
  ["","r3","","","","","","",""]
];

const body = document.getElementById("sheetBody");
rows.forEach(r => {
  const tr = body.insertRow();
  tr.className = r[1];
  const num = tr.insertCell();
  num.className = "rn";
  num.innerText = r[0];
  const vals = [r[2], r[0] ? "Required" : "", r[3], r[4], r[5], r[6], r[7], r[8]];
  vals.forEach((v, i) => {
    const d = document.createElement("div");
    d.className = i === 1 ? "cellt tier" : "cellt";
    d.innerText = v;
    tr.insertCell().appendChild(d);
  });
});
</script>
</body>
</html>
